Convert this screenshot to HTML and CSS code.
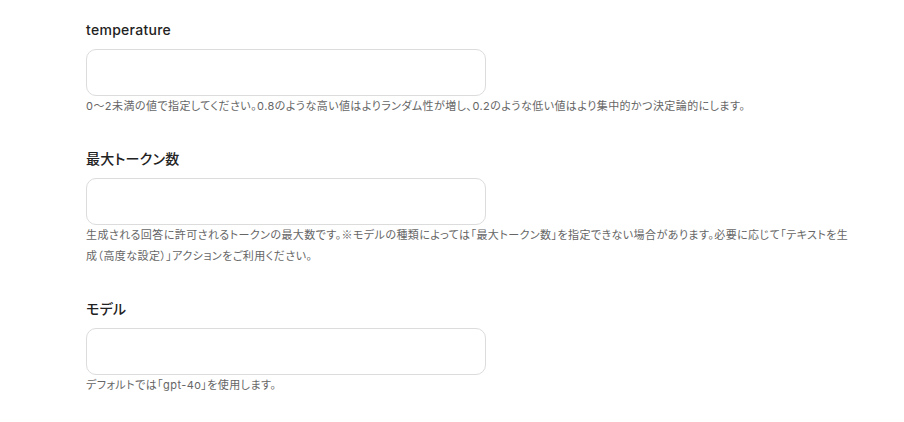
FILE: index.html
```html
<!DOCTYPE html>
<html lang="ja">
<head>
<meta charset="utf-8">
<link rel="stylesheet" href="styles.css">
</head>
<body>
<div class="form">
  <div class="field">
    <label class="label">temperature</label>
    <input class="input" type="text">
    <p class="help">0〜2未満の値で指定してください。0.8のような高い値はよりランダム性が増し、0.2のような低い値はより集中的かつ決定論的にします。</p>
  </div>
  <div class="field">
    <label class="label">最大トークン数</label>
    <input class="input" type="text">
    <p class="help">生成される回答に許可されるトークンの最大数です。<span class="cjk">※</span>モデルの種類によっては「最大トークン数」を指定できない場合があります。必要に応じて「テキストを生成（高度な設定）」アクションをご利用ください。</p>
  </div>
  <div class="field">
    <label class="label">モデル</label>
    <input class="input" type="text">
    <p class="help">デフォルトでは「gpt-4o」を使用します。</p>
  </div>
</div>
</body>
</html>
```
FILE: styles.css
```css
html, body {
  margin: 0;
  padding: 0;
  background: #ffffff;
}
body {
  font-family: Inter, "Noto Sans CJK JP", sans-serif;
  color: #222222;
  font-feature-settings: "palt";
}
.form {
  display: flex;
  flex-direction: column;
  gap: 32px;
  padding: 20px 0 0 86px;
  width: 764px;
}
.field {
  display: flex;
  flex-direction: column;
}
.label {
  font-size: 14px;
  line-height: 20px;
  font-weight: 500;
  letter-spacing: 0.02em;
  color: #222222;
  margin-bottom: 9px;
}
.input {
  box-sizing: border-box;
  width: 400px;
  height: 47px;
  border: 1px solid #dcdcdc;
  border-radius: 10px;
  background: #ffffff;
  margin: 0;
  padding: 0 12px;
  outline: none;
}
.help {
  margin: 0;
  font-size: 11px;
  line-height: 21px;
  letter-spacing: 0.04em;
  color: #666666;
}
.cjk {
  font-family: "Noto Sans CJK JP", sans-serif;
  line-height: 1;
}
```
